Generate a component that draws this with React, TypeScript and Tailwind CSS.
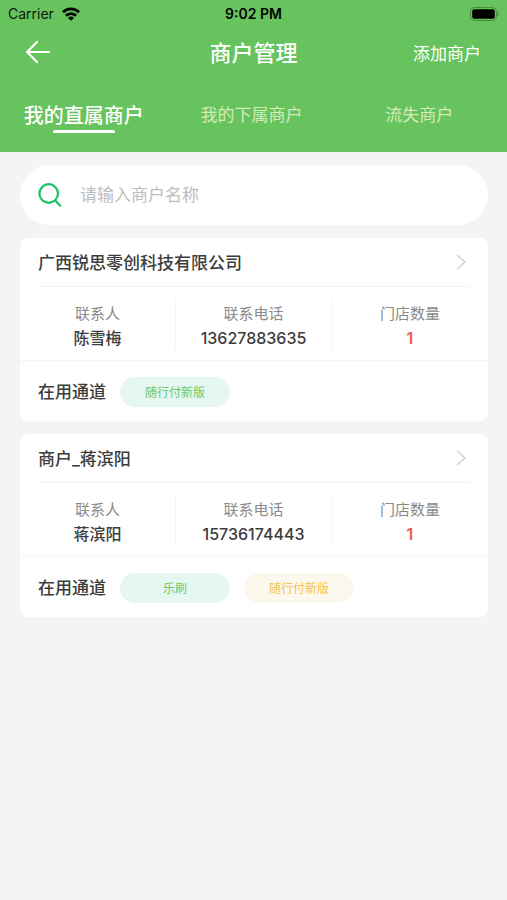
type Channel = { name: string; tone: "green" | "yellow" };

type Merchant = {
  id: number;
  name: string;
  contact: string;
  phone: string;
  stores: number;
  channels: Channel[];
};

const TABS = ["我的直属商户", "我的下属商户", "流失商户"];

const MERCHANTS: Merchant[] = [
  {
    id: 1,
    name: "广西锐思零创科技有限公司",
    contact: "陈雪梅",
    phone: "13627883635",
    stores: 1,
    channels: [{ name: "随行付新版", tone: "green" }],
  },
  {
    id: 2,
    name: "商户_蒋滨阳",
    contact: "蒋滨阳",
    phone: "15736174443",
    stores: 1,
    channels: [
      { name: "乐刷", tone: "green" },
      { name: "随行付新版", tone: "yellow" },
    ],
  },
];

const CHANNEL_TONES: Record<Channel["tone"], string> = {
  green: "bg-[#e6f7f1] text-[#6cc663]",
  yellow: "bg-[#fdf8ee] text-[#f4c542]",
};

function StatusBar() {
  return (
    <div className="grid h-7 grid-cols-3 items-center px-2 text-sm text-[#0d1a0c]">
      <div className="flex items-center gap-2">
        <span>Carrier</span>
        <svg viewBox="0 0 18 14" className="h-3.5 w-[18px]" fill="none" stroke="#000" strokeWidth="2.7">
          <path d="M1 5.2a11.4 11.4 0 0 1 16 0" />
          <path d="M3.9 8.7a7.2 7.2 0 0 1 10.2 0" />
          <path d="M9 13.8 6 10.9a4.3 4.3 0 0 1 6 0z" fill="#000" stroke="none" />
        </svg>
      </div>
      <span className="text-center font-semibold text-black">9:02 PM</span>
      <svg viewBox="0 0 30 14" className="h-3.5 w-[30px] justify-self-end">
        <rect x="1.5" y="0.5" width="26" height="13" rx="4" fill="none" stroke="#46893f" />
        <rect x="3.2" y="2.2" width="22.6" height="9.6" rx="2" fill="#000" />
        <path d="M28.6 4.8c1.6.7 1.6 3.7 0 4.4z" fill="#46893f" />
      </svg>
    </div>
  );
}

function Stat({ label, value, accent }: { label: string; value: string | number; accent?: boolean }) {
  return (
    <div className="flex h-[50px] flex-col justify-center pt-0.5 text-center">
      <dt className="text-[15px] leading-6 text-[#8a8a8a]">{label}</dt>
      <dd className={accent ? "text-base font-semibold leading-6 text-[#e95b4b]" : "text-base font-medium leading-6 text-[#3c3c3c]"}>
        {value}
      </dd>
    </div>
  );
}

function MerchantCard({ merchant }: { merchant: Merchant }) {
  return (
    <article className="rounded-lg bg-white text-[#3c3c3c]">
      <div className="px-[18px]">
        <button type="button" className="flex h-[49px] w-full items-center justify-between border-b border-[#eff3f3] text-left">
          <h2 className="pt-[3px] text-[17px] font-medium">{merchant.name}</h2>
          <svg viewBox="0 0 10 16" className="mr-1 h-4 w-2.5" fill="none" stroke="#cdcdcd" strokeWidth="1.4">
            <path d="M1 1l8 7-8 7" />
          </svg>
        </button>
      </div>
      <dl className="grid grid-cols-3 divide-x divide-[#f2f5f5] border-b border-[#f4f4f4] pb-2.5 pt-[13px]">
        <Stat label="联系人" value={merchant.contact} />
        <Stat label="联系电话" value={merchant.phone} />
        <Stat label="门店数量" value={merchant.stores} accent />
      </dl>
      <div className="flex h-[60px] items-center gap-3.5 px-[18px] pt-0.5">
        <span className="pt-0.5 text-[17px] font-medium">在用通道</span>
        {merchant.channels.map(c => (
          <span
            key={c.name}
            className={`flex h-[30px] w-[110px] items-center justify-center rounded-full pt-0.5 text-xs ${CHANNEL_TONES[c.tone]}`}
          >
            {c.name}
          </span>
        ))}
      </div>
    </article>
  );
}

export default function App() {
  return (
    <div className="min-h-screen bg-[#f4f4f4] font-['Inter','Noto_Sans_CJK_SC',sans-serif]">
      <header className="bg-[#67c35d] text-white">
        <StatusBar />
        <div className="grid h-12 grid-cols-3 items-center px-[26px]">
          <button type="button" aria-label="返回" className="justify-self-start">
            <svg viewBox="0 0 24 22" className="h-[22px] w-6" fill="none" stroke="currentColor" strokeWidth="2.2" strokeLinecap="round" strokeLinejoin="round">
              <path d="M23 11H1M11 1 1 11l10 10" />
            </svg>
          </button>
          <h1 className="pt-0.5 text-center text-[22px] font-medium">商户管理</h1>
          <button type="button" className="justify-self-end pt-[5px] text-[17px]">添加商户</button>
        </div>
        <nav className="grid h-[76px] grid-cols-3 pr-1">
          {TABS.map((tab, i) => (
            <button
              key={tab}
              type="button"
              className={i === 0 ? "relative pt-1 text-[20px] font-medium" : "relative pt-1 text-[17px] text-[#d5ebb9]"}
            >
              {tab}
              {i === 0 && <span className="absolute inset-x-0 bottom-[19px] mx-auto h-[3px] w-[62px] rounded-full bg-white" />}
            </button>
          ))}
        </nav>
      </header>

      <main className="flex flex-col gap-[13px] py-[13px] pl-5 pr-[19px]">
        <label className="flex h-[60px] items-center gap-[18px] rounded-full bg-white px-[18px]">
          <svg viewBox="0 0 24 24" className="size-6 shrink-0" fill="none" stroke="#19c066" strokeWidth="2.2">
            <circle cx="10.7" cy="10.5" r="9.3" />
            <path d="M16.6 17 22.8 23.2" />
          </svg>
          <input
            type="text"
            aria-label="商户名称"
            placeholder="请输入商户名称"
            className="min-w-0 flex-1 bg-transparent pt-0.5 text-[17px] outline-none placeholder:text-[#bdbdbd]"
          />
        </label>
        {MERCHANTS.map(m => (
          <MerchantCard key={m.id} merchant={m} />
        ))}
      </main>
    </div>
  );
}
